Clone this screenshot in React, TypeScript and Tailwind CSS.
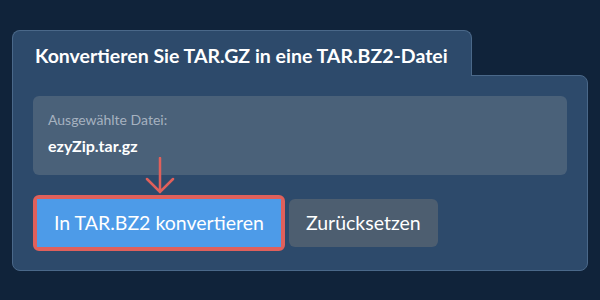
import React from "react";

const App = () => {
  return (
    <div className="w-[600px] h-[300px] bg-[#10233a] pt-[30px] pl-3 font-['Lato',sans-serif]">
      {/* Tab header */}
      <div className="inline-block h-[46px] pl-[22px] pr-[23px] pt-[13px] bg-[#2d4a6b] border border-b-0 border-[#4a6889] rounded-t-lg relative z-10">
        <h2 className="text-[19.5px] leading-[24px] font-bold text-white">Konvertieren Sie TAR.GZ in eine TAR.BZ2-Datei</h2>
      </div>

      {/* Body */}
      <div className="w-[576px] h-[196px] -mt-px bg-[#2d4a6b] border border-[#4a6889] rounded-b-lg rounded-tr-lg px-5 pt-5 relative">
        <div className="h-[79px] bg-[#4a6179] rounded-md px-[15px] pt-[15px]">
          <p className="text-[14px] leading-[18px] text-[#a6b2c0]">Ausgewählte Datei:</p>
          <p className="mt-[6px] text-[16px] leading-[22px] font-bold text-white">ezyZip.tar.gz</p>
        </div>

        <div className="mt-5 flex items-center gap-1">
          <div className="border-4 border-[#e0605b] rounded-md">
            <button className="h-12 px-[17px] bg-[#4d9be8] text-white text-[19.5px] font-normal">In TAR.BZ2 konvertieren</button>
          </div>
          <button className="h-12 px-[17px] bg-[#4d5e70] text-white text-[19.5px] font-normal rounded-md">Zurücksetzen</button>
        </div>

        {/* Annotation arrow */}
        <svg className="absolute left-[132px] top-[81px]" width="30" height="38" viewBox="0 0 30 38" fill="none">
          <path d="M15 1 V35 M2 22 L15 35 L28 22" stroke="#e0605b" strokeWidth="2.5" strokeLinecap="round" strokeLinejoin="miter" />
        </svg>
      </div>
    </div>
  );
};

export default App;
